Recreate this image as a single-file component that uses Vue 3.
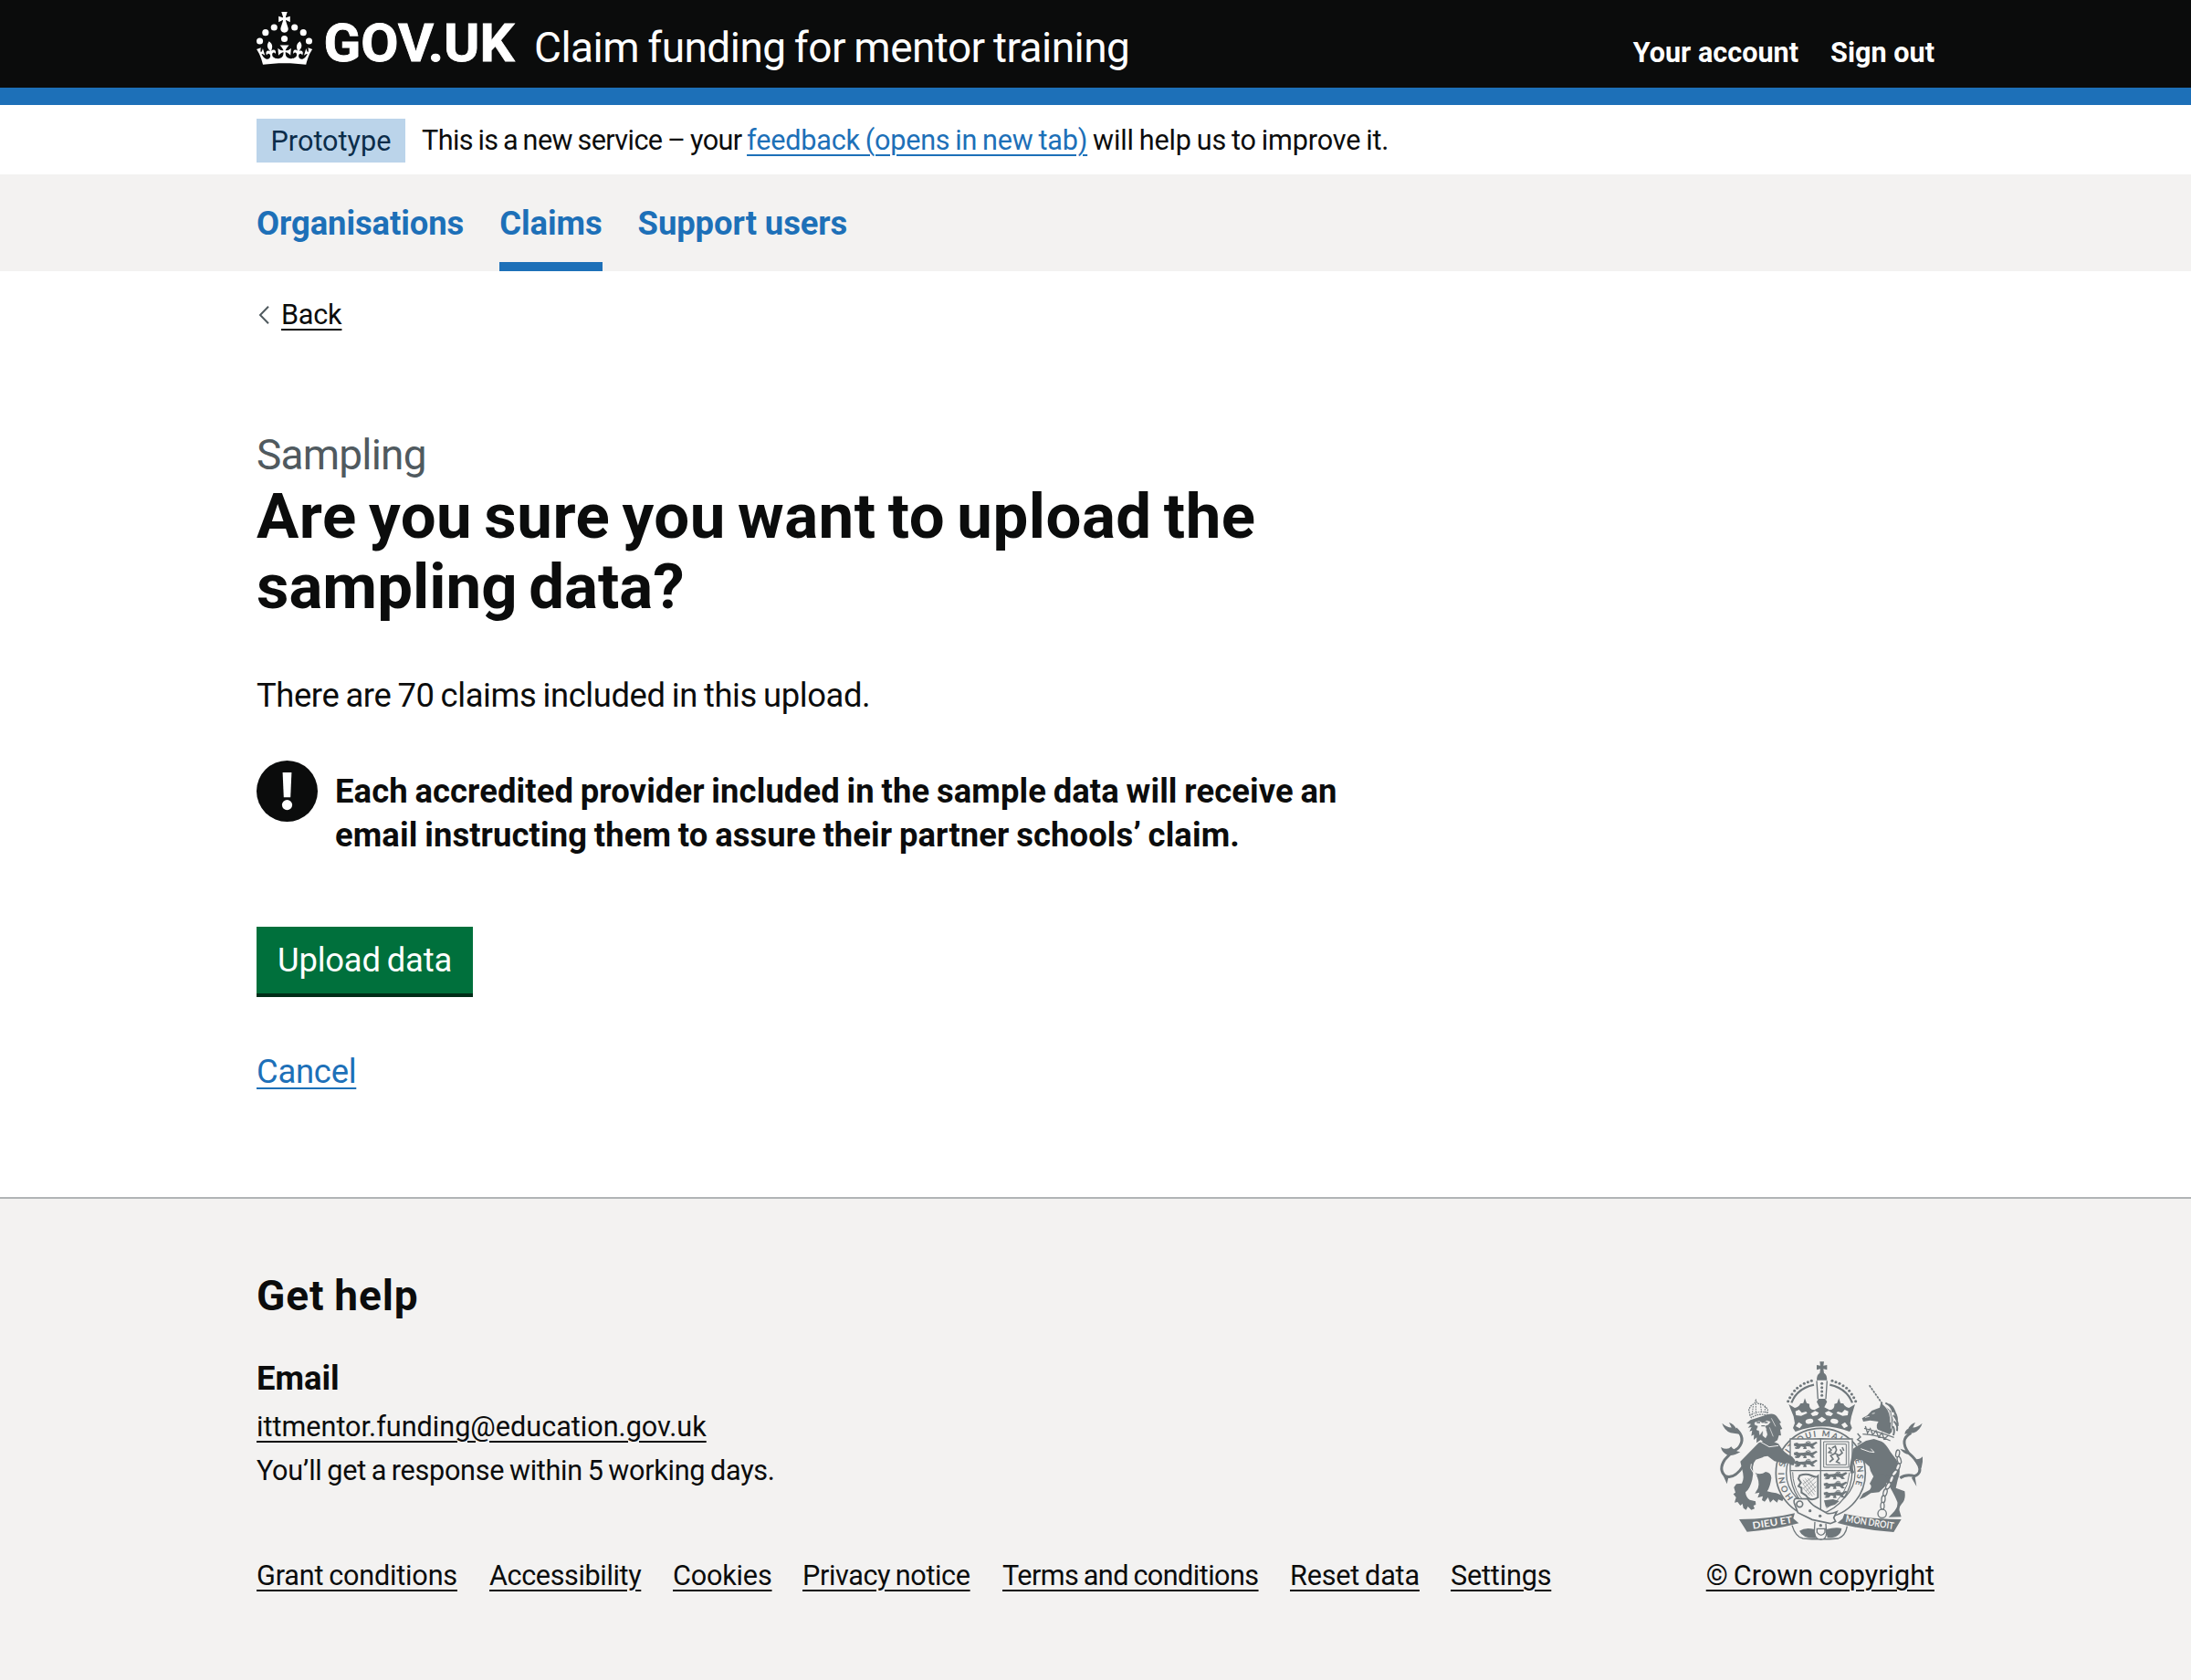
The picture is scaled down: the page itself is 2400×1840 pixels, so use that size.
<script setup>
const navItems = [
  { label: 'Organisations', active: false },
  { label: 'Claims', active: true },
  { label: 'Support users', active: false },
]

const footerLinks = [
  { label: 'Grant conditions', width: 220 },
  { label: 'Accessibility', width: 166 },
  { label: 'Cookies', width: 107 },
  { label: 'Privacy notice', width: 184 },
  { label: 'Terms and conditions', width: 280 },
  { label: 'Reset data', width: 141 },
  { label: 'Settings', width: 112 },
]

const halfDots = [
  [296, 194], [302, 182], [309, 171], [317, 160], [326, 151], [337, 143], [349, 136], [361, 131], [373, 127],
]
const crownDots = [...halfDots, ...halfDots.map(([x, y]) => [814 - x, y])]

const chain = [
  [656, 366, 10], [661, 388, -15], [657, 410, 20], [646, 430, 40], [636, 450, 20],
  [625, 472, 30], [615, 494, 15], [609, 516, 5], [606, 538, 0],
]

const lions = [
  [314, 330], [314, 360], [314, 389], [412, 430], [412, 461], [412, 491],
]
</script>

<template>
  <div class="page">
    <header class="header">
      <div class="container header-row">
        <svg class="logo" width="286" height="72" viewBox="0 0 286 72" role="img" aria-label="GOV.UK">
          <g fill="#fff" transform="scale(.963)">
            <circle cx="20" cy="17.6" r="3.7" />
            <circle cx="10.2" cy="23.5" r="3.7" />
            <circle cx="3.7" cy="33.2" r="3.7" />
            <circle cx="31.7" cy="30.6" r="3.7" />
            <circle cx="43.3" cy="17.6" r="3.7" />
            <circle cx="53.2" cy="23.5" r="3.7" />
            <circle cx="59.7" cy="33.2" r="3.7" />
            <path d="M33.1,9.8c.2-.1.3-.3.5-.5l4.6,2.4v-6.8l-4.6,1.5c-.1-.2-.3-.3-.5-.5l1.9-5.9h-6.7l1.9,5.9c-.2.1-.3.3-.5.5l-4.6-1.5v6.8l4.6-2.4c.1.2.3.3.5.5l-2.6,8c-.9,2.8,1.2,5.7,4.1,5.7h0c3,0,5.1-2.9,4.1-5.7l-2.6-8ZM37,37.9s-3.4,3.8-4.1,6.1c2.2,0,4.2-.5,6.4-2.8l-.7,8.5c-2-2.8-4.4-4.1-5.7-3.8.1,3.1.5,6.7,5.8,7.2,3.7.3,6.7-1.5,7-3.8.4-2.6-2-4.3-3.7-1.6-1.4-4.5,2.4-6.1,4.9-3.2-1.9-4.5-1.8-7.7,2.4-10.9,3,4,2.6,7.3-1.2,11.1,2.4-1.3,6.2,0,4,4.6-1.2-2.8-3.7-2.2-4.2.2-.3,1.7.7,3.7,3,4.2,1.9.3,4.7-.9,7-5.9-1.3,0-2.4.7-3.9,1.7l2.4-8c.6,2.3,1.4,3.7,2.2,4.5.6-1.6.5-2.8,0-5.3l5,1.8c-2.6,3.6-5.2,8.7-7.3,17.5-7.4-1.1-15.7-1.7-24.5-1.7h0c-8.8,0-17.1.6-24.5,1.7-2.1-8.9-4.7-13.9-7.3-17.5l5-1.8c-.5,2.5-.6,3.7,0,5.3.8-.8,1.6-2.3,2.2-4.5l2.4,8c-1.5-1-2.6-1.7-3.9-1.7,2.3,5,5.2,6.2,7,5.9,2.3-.4,3.3-2.4,3-4.2-.5-2.4-3-3.1-4.2-.2-2.2-4.6,1.6-6,4-4.6-3.7-3.7-4.2-7.1-1.2-11.1,4.2,3.2,4.3,6.4,2.4,10.9,2.5-2.8,6.3-1.3,4.9,3.2-1.8-2.7-4.1-1-3.7,1.6.3,2.3,3.3,4.1,7,3.8,5.4-.5,5.7-4.2,5.8-7.2-1.3-.2-3.7,1-5.7,3.8l-.7-8.5c2.2,2.3,4.2,2.7,6.4,2.8-.7-2.3-4.1-6.1-4.1-6.1h10.6Z" />
          </g>
          <text x="73.5" y="53.5" textLength="209" lengthAdjust="spacingAndGlyphs" class="logo-text">GOV.UK</text>
        </svg>
        <span class="service-name">Claim funding for mentor training</span>
        <nav class="account">
          <a>Your account</a>
          <a>Sign out</a>
        </nav>
      </div>
    </header>

    <div class="phase">
      <div class="container phase-row">
        <strong class="tag">Prototype</strong>
        <span class="phase-text"><span class="lead">This is a new service – your </span><a class="link">feedback (opens in new tab)</a> will help us to improve it.</span>
      </div>
    </div>

    <nav class="primary">
      <ul class="container primary-list">
        <li v-for="item in navItems" :key="item.label" :class="{ active: item.active }">{{ item.label }}</li>
      </ul>
    </nav>

    <main class="container main">
      <a class="back">
        <svg width="12" height="20" viewBox="0 0 12 20"><path d="M11 .8 2 10l9 9.2" fill="none" stroke="#505a5f" stroke-width="2" /></svg>
        <span>Back</span>
      </a>
      <span class="caption">Sampling</span>
      <h1>Are you sure you want to upload the<br /><span class="second">sampling data?</span></h1>
      <p class="body">There are 70 claims included in this upload.</p>
      <div class="warning">
        <svg width="67" height="67" viewBox="0 0 67 67">
          <circle cx="33.5" cy="33.5" r="33.5" fill="#0b0c0c" />
          <path d="M28.6 13h9.8l-1.2 27.3h-7.4z" fill="#fff" />
          <circle cx="33.5" cy="48.6" r="5.6" fill="#fff" />
        </svg>
        <strong>Each accredited provider included in the sample data will receive an<br />email instructing them to assure their partner schools’ claim.</strong>
      </div>
      <button class="button" type="button">Upload data</button>
      <a class="cancel">Cancel</a>
    </main>

    <footer class="footer">
      <div class="container footer-row">
        <div class="footer-main">
          <h2>Get help</h2>
          <h3>Email</h3>
          <a class="email">ittmentor.funding@education.gov.uk</a>
          <p class="response">You’ll get a response within 5 working days.</p>
          <ul class="footer-links">
            <li v-for="link in footerLinks" :key="link.label" :style="{ width: link.width + 'px' }">
              <a :class="{ tight: link.label.startsWith('Terms'), snug: ['Accessibility', 'Privacy notice'].includes(link.label) }">{{ link.label }}</a>
            </li>
          </ul>
        </div>
        <div class="crest">
          <svg class="arms" width="226" height="199" viewBox="66 60 678 597">
            <defs>
              <path id="garter" d="M314 510A120 120 0 1 1 459 536" />
              <g id="passant">
                <path d="M1 3l10-3 7 4 16-1 14-4 12 4 14-6 5 4-9 6-6 5 7 7-10 1-8-7-12-1 2 9h-12l3-6-9-3-7 8-13 1 6-8-9-2z" />
                <path d="M14 12l-10 6M40 0l8-4 8 3" fill="none" stroke="#6f777b" stroke-width="3" />
              </g>
            </defs>

            <!-- garter and shield -->
            <circle cx="403" cy="430" r="147" fill="#f3f2f1" stroke="#6f777b" stroke-width="5" />
            <circle cx="403" cy="430" r="113" fill="none" stroke="#6f777b" stroke-width="4" />
            <text class="garter-text"><textPath href="#garter">HONI SOIT QUI MAL Y PENSE</textPath></text>
            <path d="M303 318h204v104q-4 110-104 143-97-37-100-143z" fill="#f3f2f1" stroke="#6f777b" stroke-width="4" />
            <path d="M403 318v247M303 422h204" stroke="#6f777b" stroke-width="4" />
            <path d="M311 427q2 90 86 128M498 428q-8 84-76 117" fill="none" stroke="#6f777b" stroke-width="3" />
            <g fill="#6f777b">
              <use v-for="(l, i) in lions" :key="i" href="#passant" :x="l[0]" :y="l[1]" />
              <path d="M414 520l30-4 20 6-14 12-30 8z" />
            </g>
            <g fill="none" stroke="#6f777b">
              <path d="M413 327h82v84h-82z" stroke-width="3" />
              <path d="M421 335h66v68h-66z" stroke-width="3" />
              <path d="M429 346l9 8-8 8 10 2M440 348l11-6 4 12-5 11 14 7 10-8-7-12M450 365l-14 8 8 11-12 10M456 371l7 12-8 10 12 5M474 345l5 12" stroke-width="5" />
              <path d="M334 438q22-8 38 0t22 2v70q-24 16-39-6l-15-10v-15l-10-6 8-12-8-12z" stroke-width="6" />
              <path d="M345 452l38 50M344 464l32 42M352 448l34 44M361 447l26 33M345 478l22 26M345 466l30-22M347 480l38-34M354 490l34-32M362 499l27-26" stroke-width="1.6" />
            </g>

            <!-- royal crown -->
            <g fill="#6f777b">
              <path d="M400 64h14l-2 13 12-2v16l-12-3 2 14h-14l2-14-12 3V75l12 2z" />
              <path d="M398 103q9-5 18 0 8 6 8 22h-34q0-16 8-22z" />
              <circle v-for="(d, i) in crownDots" :key="i" :cx="d[0]" :cy="d[1]" r="4.6" />
              <path d="M307 199q18-47 74-59M507 199q-18-47-74-59" fill="none" stroke="#6f777b" stroke-width="7" />
              <path d="M390 127l4 60M424 127l-4 60" fill="none" stroke="#6f777b" stroke-width="4" />
              <circle v-for="y in [136, 149, 162, 175]" :key="y" cx="407" :cy="y" r="4.5" />
              <path d="M298 204l20 12q16-4 18-14l10-2 5-16 6 16 9 3q-3 17 16 20l17-9-9-18 6-10h22l6 10-9 18 17 9q19-3 16-20l9-3 6-16 5 16 10 2q2 10 18 14l20-12-12 40-4 22 6 16-8 12q-89-34-178 0l-8-12 6-16-4-22z" />
              <g fill="#f3f2f1">
                <path d="M320 227l12-5 9 10 14-4 4 5-20 9-17-2zM494 227l-12-5-9 10-14-4-4 5 20 9 17-2zM370 235l15-9 12 6-5 8-15 3zM444 235l-15-9-12 6 5 8 15 3z" />
                <path d="M331 263l12 8-9 12-13-7zM407 245l14 9-14 10-14-10zM483 263l-12 8 9 12 13-7z" />
                <ellipse cx="366" cy="260" rx="13" ry="8" transform="rotate(-12 366 260)" />
                <ellipse cx="448" cy="260" rx="13" ry="8" transform="rotate(12 448 260)" />
              </g>
            </g>

            <!-- lion supporter -->
            <g fill="#6f777b">
              <path d="M171 241l-4-20 7-12 12-8 4-10 4 10 15 2 13 9 7 10-2 18q-28-8-52 8z" fill="none" stroke="#6f777b" stroke-width="4" stroke-dasharray="5 3" />
              <path d="M174 238q28-14 56-6M190 202v34M205 203l4 28M181 210l-3 30M220 211v22" fill="none" stroke="#6f777b" stroke-width="3" stroke-dasharray="5 3" />
              <path d="M172 256l56-18q20-8 32 7l13 19-5 3 9 18-7 2 3 20-7-1-5 16-16 10-28-2-11-9-14 10 1-18-10 8 1-17-9 4 3-18-9 3 7-14-12 2 10-12-15-2z" />
              <path d="M187 264l14-4 12 7 13-8 11 3-6 8-12 5 5 11-4 14-8-9-9 13-2-14-8-2 5-13-11-4zM214 294l10-3 3 13-5 10-9-7zM241 250l14 27M235 280l12 30" fill="#f3f2f1" stroke="#f3f2f1" stroke-width="2" />
              <path d="M193 264h11M218 264h11M208 275h12" stroke="#6f777b" stroke-width="4" />
              <path d="M200 330l36-8 28 12q20 34 45 42l10 12-5 17-11-2-8-8-8 5-17-5-19-4-22-17q-14 0-17 5l-22 7q-8 8-10 24 3 22-2 42-8 31-22 41 2 19 14 25l19 5 1 11-8 3 4 10-11 4-11-11-6 11-9-6-3-14-7 6-9-12-10 2 5-17-9-11 7-5-5-17 8-11 18-2q10-17 0-49l-5-23z" />
              <path d="M188 430q20 7 34-4 18 2 19 20-4 30-14 44 15 5 30 6l15 6 10 12-5 8-13-5-4 10-13-10-10 10-7-17-11 14-9-5 3-13-17 5 6-17-15 3 10-17q8-21-9-50z" />
              <path d="M175 400l-2 14 12 20 9 2M206 328l28 16 30-4" fill="none" stroke="#f3f2f1" stroke-width="3" />
              <path d="M148 408Q118 452 90 440Q66 420 88 386Q106 364 132 348Q160 316 124 284" fill="none" stroke="#6f777b" stroke-width="9" />
              <path d="M79 266q18 16 34 14 22 4 24 22l-30-4q-22-10-28-32zM102 264q16 4 24 22l-14-2zM75 345q22 12 34-2 8 14 30 18-22 14-42 10-18-8-22-26zM80 432l20 12-5 22z" />
            </g>

            <!-- unicorn supporter -->
            <g fill="#6f777b">
              <path d="M563 142l43 61" fill="none" stroke="#6f777b" stroke-width="5" stroke-dasharray="8 3" />
              <path d="M539 250l17-9 15-16 26-10 4-16 12 12 20 14 8 30-4 40-8 8-38-16q-9-12 2-26l-28-4-22 4z" />
              <path d="M616 200q20 8 24 30M628 204q18 12 20 34M638 220q16 16 16 36M642 240q16 16 14 36M644 260q14 14 10 32M640 276q8 12 2 30" fill="none" stroke="#6f777b" stroke-width="6" />
              <path d="M616 212q18 20 16 52M626 222q14 22 8 62M581 233l-9 2M549 247l14-3" fill="none" stroke="#f3f2f1" stroke-width="2.5" />
              <path d="M546 283q38 8 98 30M541 302q50 3 91 22M550 276l7 22 9-14 8 20 11-13 8 20 12-13 6 20 14-11" fill="none" stroke="#6f777b" stroke-width="4" />
              <path d="M524 300l10 12-10 8 12 8-12 8" fill="none" stroke="#6f777b" stroke-width="4" />
              <path d="M510 350q20-14 42-26l26-6 25 8q14 7 29 34l20 26q19 33 4 67l-6 26 29 11q5 27-10 42-12 13-5 28l4 14-42 1 12-12q20-19 17-38-16-38-34-62-30-4-46-24-10-16-12-30l-24-21-19-3q-15 12-12 30l6 14-11 3-6-18z" />
              <path d="M530 517l12-20 22-12q10-12 0-20l14-26 27-6 19 6-6 32-23 22-27 3-20 13z" />
              <path d="M620 438l10 22" stroke="#6f777b" stroke-width="8" />
              <path d="M535 350l28 10 16 2-11-12" fill="none" stroke="#f3f2f1" stroke-width="3" />
              <path d="M664 446q20-14 48-6 24-10 14-34-10-22-34-42-32-44 8-66" fill="none" stroke="#6f777b" stroke-width="9" />
              <path d="M737 266q-18 16-34 14-22 4-24 22l30-4q22-10 28-32zM714 264q-16 4-24 22l14-2zM738 376q-10 12-30 8l14 22 12 8q6-20 4-38zM712 436l6 38-16-28zM664 350q12 18 30 18l-10-12z" />
              <ellipse v-for="(c, i) in chain" :key="i" :cx="c[0]" :cy="c[1]" rx="6" ry="12" :transform="`rotate(${c[2]} ${c[0]} ${c[1]})`" fill="#f3f2f1" stroke="#6f777b" stroke-width="4" />
              <circle cx="605" cy="563" r="14" fill="#f3f2f1" stroke="#6f777b" stroke-width="4" />
            </g>

            <!-- belt and motto -->
            <path d="M316 528q-4-17 14-14l30 1q13 18 25 25l38 22q13 4 33-5l-10 20 6 12-17 7-60-13-47-23z" fill="#f3f2f1" stroke="#6f777b" stroke-width="5" />
            <circle cx="334" cy="532" r="10" fill="none" stroke="#6f777b" stroke-width="5" />
            <g fill="#6f777b">
              <circle cx="368" cy="554" r="5" />
              <circle cx="401" cy="571" r="5" />
              <path d="M135 582q105-1 183-20l-5 17 18 16q-85 23-170 28zM668 582q-104 0-187-18l-6 16-17 14q92 25 185 30z" />
              <path d="M333 620q20-13 50-5l4 29q-42 2-54-24zM420 615q34-8 52-3-4 32-47 31z" />
              <path d="M309 602q12 39 36 43 60 5 116 0 24-9 29-40M384 590l-2 35q4 24 22 24 17 0 18-22l-2-31M391 613v12q14 18 26 0v-12z" fill="none" stroke="#6f777b" stroke-width="4" />
              <circle cx="403" cy="602" r="5" />
            </g>
            <g class="motto">
              <text transform="translate(181 614) rotate(-9)" textLength="132" lengthAdjust="spacingAndGlyphs">DIEU ET</text>
              <text transform="translate(484 590) rotate(9)" textLength="160" lengthAdjust="spacingAndGlyphs">MON DROIT</text>
            </g>
          </svg>
          <a class="copyright">© Crown copyright</a>
        </div>
      </div>
    </footer>
  </div>
</template>

<style>
body {
  margin: 0;
  background: #fff;
}
</style>

<style scoped>
.page {
  height: 1840px;
  display: flex;
  flex-direction: column;
  font-family: Roboto, "Liberation Sans", sans-serif;
  font-size: 30.6px;
  line-height: 40px;
  word-spacing: -0.05em;
  color: #0b0c0c;
  overflow: hidden;
}
.container {
  width: 1838px;
  margin: 0 auto;
}
ul {
  list-style: none;
  padding: 0;
}
h1, h2, h3, p {
  margin: 0;
}
svg {
  display: block;
  flex: none;
  overflow: visible;
}
.header {
  height: 96px;
  background: #0b0c0c;
  border-bottom: 19px solid #1d70b8;
  color: #fff;
}
.header-row {
  display: flex;
  align-items: flex-start;
}
.logo {
  margin-top: 13px;
}
.logo-text {
  font-size: 57px;
  font-weight: 700;
  fill: #fff;
  stroke: #fff;
  stroke-width: 0.8px;
}
.service-name {
  margin: 29px 0 0 18px;
  font-size: 46px;
  line-height: 46px;
  letter-spacing: -0.55px;
}
.account {
  margin: 37.5px 0 0 auto;
  display: flex;
  gap: 35px;
  font-weight: 700;
  word-spacing: 0;
}
.phase {
  height: 76px;
}
.phase-row {
  display: flex;
  align-items: flex-start;
}
.tag {
  box-sizing: border-box;
  margin-top: 15px;
  width: 163px;
  height: 48px;
  padding-top: 1px;
  line-height: 47px;
  text-align: center;
  font-weight: 400;
  background: #bbd4ea;
  color: #0c2d4a;
}
.phase-text {
  margin: 15px 0 0 18px;
  line-height: 48px;
  letter-spacing: -0.15px;
  white-space: pre;
}
.lead {
  letter-spacing: -0.58px;
}
.link {
  color: #1d70b8;
  letter-spacing: -0.2px;
  text-decoration: underline;
  text-decoration-thickness: 2px;
  text-underline-offset: 5px;
}
.primary {
  height: 106px;
  background: #f3f2f1;
}
.primary-list {
  display: flex;
  gap: 39px;
}
.primary-list li {
  box-sizing: border-box;
  height: 106px;
  padding-top: 31px;
  border-bottom: 10px solid transparent;
  font-size: 36.4px;
  line-height: 46px;
  font-weight: 700;
  letter-spacing: -0.07px;
  word-spacing: 0;
  color: #1d70b8;
}
.primary-list .active {
  border-bottom-color: #1d70b8;
}
.main {
  height: 1014px;
  display: flex;
  flex-direction: column;
  align-items: flex-start;
}
.back {
  margin-top: 28px;
  display: flex;
  align-items: center;
  gap: 13px;
  padding-left: 2px;
  letter-spacing: -0.2px;
}
.back span,
.email,
.footer-links a,
.copyright,
.cancel {
  text-decoration: underline;
  text-decoration-thickness: 2px;
  text-underline-offset: 5px;
}
.caption {
  margin-top: 104px;
  font-size: 46px;
  line-height: 58px;
  letter-spacing: -0.8px;
  color: #505a5f;
}
h1 {
  font-size: 69px;
  line-height: 77px;
  font-weight: 700;
  letter-spacing: 0.5px;
  word-spacing: -4.5px;
}
.second {
  letter-spacing: 0;
}
.body {
  margin-top: 57px;
  font-size: 36.4px;
  line-height: 48px;
  letter-spacing: -0.4px;
}
.warning {
  margin-top: 47px;
  display: flex;
  gap: 19px;
}
.warning strong {
  margin-top: 10px;
  font-size: 36.4px;
  line-height: 48px;
  font-weight: 700;
  letter-spacing: 0.1px;
  word-spacing: -1.4px;
}
.button {
  box-sizing: border-box;
  margin-top: 76px;
  width: 237px;
  height: 73px;
  padding: 1px 0 0;
  border: 0;
  background: #00703c;
  box-shadow: 0 4px 0 #002d18;
  color: #fff;
  font: 400 36.4px/72px Roboto, "Liberation Sans", sans-serif;
  word-spacing: -0.05em;
  letter-spacing: -0.2px;
}
.cancel {
  margin-top: 62px;
  font-size: 36.4px;
  line-height: 48px;
  letter-spacing: -0.25px;
  color: #1d70b8;
}
.footer {
  flex: 1;
  background: #f3f2f1;
  border-top: 2px solid #b1b4b6;
}
.footer-row {
  display: flex;
  justify-content: space-between;
  align-items: flex-end;
}
h2 {
  margin-top: 77px;
  font-size: 46px;
  line-height: 58px;
  letter-spacing: 0.9px;
}
h3 {
  margin-top: 38px;
  font-size: 36.4px;
  line-height: 48px;
}
.email {
  display: block;
  width: max-content;
  margin-top: 5px;
  line-height: 48px;
}
.response {
  line-height: 48px;
  letter-spacing: -0.28px;
}
.footer-links {
  display: flex;
  gap: 35px;
  margin: 71px 0 0;
  letter-spacing: -0.18px;
  white-space: nowrap;
}
.snug {
  letter-spacing: -0.38px;
}
.tight {
  letter-spacing: -0.55px;
}
.crest {
  display: flex;
  flex-direction: column;
  align-items: flex-end;
}
.arms {
  margin: 0 11px 17px 0;
}
.garter-text {
  font: 700 28px Lato, sans-serif;
  letter-spacing: 5px;
  word-spacing: 0;
  fill: #6f777b;
}
.motto {
  font: 700 32px Lato, sans-serif;
  fill: #f3f2f1;
}
</style>
